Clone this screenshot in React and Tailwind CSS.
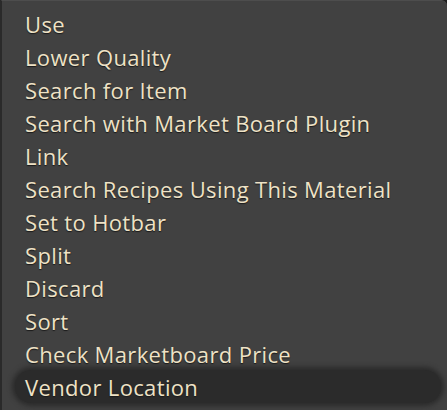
const items = [
  "Use",
  "Lower Quality",
  "Search for Item",
  "Search with Market Board Plugin",
  "Link",
  "Search Recipes Using This Material",
  "Set to Hotbar",
  "Split",
  "Discard",
  "Sort",
  "Check Marketboard Price",
  "Vendor Location",
];

const App = () => {
  return (
    <div className="w-[447px] h-[410px] bg-[#1e1e1e]">
      <div
        className="h-full w-full bg-[#414141] border-l-2 border-l-[#2a2a2a] border-t border-t-[#4d4d4d] rounded-tr-md pt-[6px] pl-[13px] pr-[6px]"
        style={{ fontFamily: '"Open Sans", "Noto Sans", sans-serif' }}
      >
        {items.map((item, index) => {
          const active = index === items.length - 1;
          return (
            <div
              key={index}
              className={
                active
                  ? "h-[33px] flex items-center pl-[10px] rounded-full bg-[#2b2b2b] shadow-[0_0_5px_3px_#2b2b2b]"
                  : "h-[33px] flex items-center pl-[10px]"
              }
            >
              <span className="text-[22px] leading-none tracking-[0.35px] text-[#eee2c6] [text-shadow:0_1px_1px_#1a1a1a]">
                {item}
              </span>
            </div>
          );
        })}
      </div>
    </div>
  );
};

export default App;
